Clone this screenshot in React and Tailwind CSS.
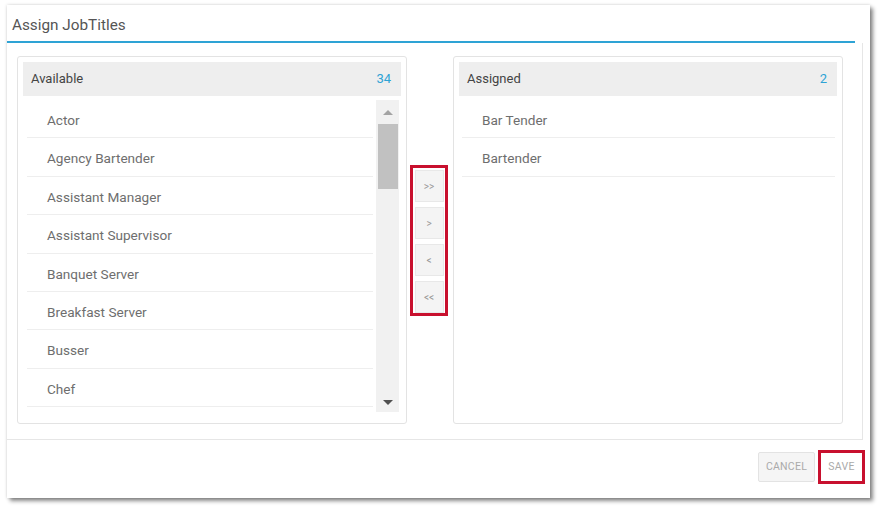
const available = [
  'Actor',
  'Agency Bartender',
  'Assistant Manager',
  'Assistant Supervisor',
  'Banquet Server',
  'Breakfast Server',
  'Busser',
  'Chef',
]

const assigned = ['Bar Tender', 'Bartender']

export default function App() {
  return (
    <div className="w-[880px] h-[508px] bg-white pt-[5px] pl-[7px] font-['Roboto',sans-serif]">
      <div className="w-[863px] h-[493px] bg-white shadow-[0_0_3px_rgba(0,0,0,0.18),3px_3px_4px_rgba(0,0,0,0.45)] flex flex-col">
        {/* Header */}
        <div className="w-[848px] h-[38px] border-b-2 border-[#2ea3d5] pl-[5px] pt-[5px] flex items-center">
          <span className="text-[15.3px] text-[#555]">Assign JobTitles</span>
        </div>

        {/* Body */}
        <div className="w-[856px] h-[397px] border-r border-b border-[#e6e6e6] pl-[10px] pt-[13px] flex">
          <Panel title="Available" count="34" scroll>
            {available.map((a) => (
              <Row key={a} label={a} />
            ))}
          </Panel>

          <div className="w-[46px] pl-[3px] pt-[109px]">
            <div className="w-[38px] h-[151px] border-[3px] border-[#c8102e] pt-[2px] flex flex-col items-center gap-[5px]">
              {['>>', '>', '<', '<<'].map((b) => (
                <button
                  key={b}
                  className="w-[29px] h-[32px] bg-[#f4f4f4] border border-[#e8e8e8] text-[10px] text-[#999] flex items-center justify-center"
                >
                  {b}
                </button>
              ))}
            </div>
          </div>

          <Panel title="Assigned" count="2">
            {assigned.map((a) => (
              <Row key={a} label={a} />
            ))}
          </Panel>
        </div>

        {/* Footer */}
        <div className="flex-1 flex justify-end items-start pt-[10px] pr-[5px] gap-[3px]">
          <button className="mt-[2px] w-[57px] h-[30px] bg-[#f5f5f5] border border-[#e3e3e3] rounded-[2px] text-[10.5px] text-[#aaa] tracking-wide">
            CANCEL
          </button>
          <div className="w-[47px] h-[34px] border-[3px] border-[#c8102e] bg-white flex items-center justify-center">
            <span className="text-[10.5px] text-[#aaa] tracking-wide">SAVE</span>
          </div>
        </div>
      </div>
    </div>
  )
}

function Panel({ title, count, scroll, children }) {
  return (
    <div className="w-[390px] h-[368px] border border-[#e3e3e3] rounded-[3px] p-[5px] flex flex-col">
      <div className="h-[34px] bg-[#eeeeee] pl-[8px] pr-[10px] flex items-center justify-between">
        <span className="text-[13px] text-[#444]">{title}</span>
        <span className="text-[13px] text-[#2ea3d5]">{count}</span>
      </div>
      <div className="mt-[4px] flex">
        <div className={scroll ? 'w-[346px] ml-[4px]' : 'w-[373px] ml-[3px]'}>{children}</div>
        {scroll && (
          <div className="ml-[3px] w-[23px] h-[312px] bg-[#f1f1f1] flex flex-col items-center">
            <div className="h-[24px] flex items-center justify-center">
              <div className="w-0 h-0 border-l-[5px] border-r-[5px] border-b-[5px] border-l-transparent border-r-transparent border-b-[#a3a3a3]" />
            </div>
            <div className="w-[20px] h-[65px] bg-[#c1c1c1]" />
            <div className="flex-1" />
            <div className="h-[20px] flex items-center justify-center">
              <div className="w-0 h-0 border-l-[5px] border-r-[5px] border-t-[5px] border-l-transparent border-r-transparent border-t-[#505050]" />
            </div>
          </div>
        )}
      </div>
    </div>
  )
}

function Row({ label }) {
  return (
    <div className="h-[38.4px] border-b border-[#eeeeee] pl-[20px] pt-[3px] flex items-center text-[13.6px] text-[#6e6e6e]">
      {label}
    </div>
  )
}
